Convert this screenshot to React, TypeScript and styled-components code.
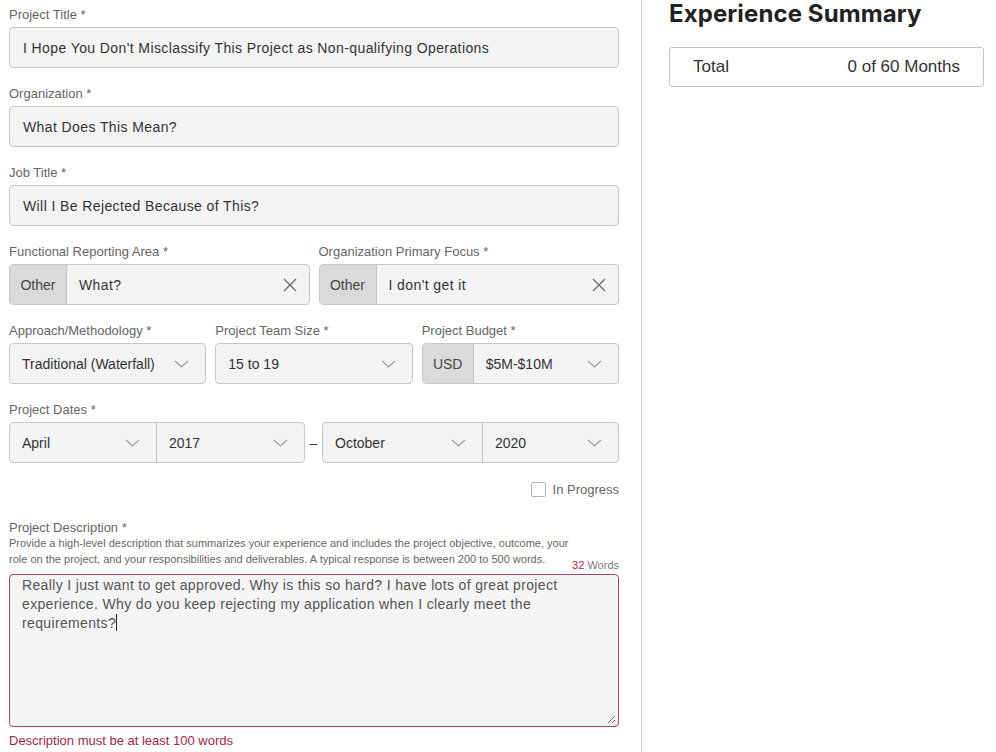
import styled, { createGlobalStyle } from "styled-components";

const GlobalStyle = createGlobalStyle`
  html, body {
    margin: 0;
    padding: 0;
    background: #ffffff;
  }
  body {
    font-family: "Liberation Sans", Arial, sans-serif;
    color: #333333;
  }
`;

const Page = styled.div`
  display: flex;
  min-height: 100vh;
  overflow: hidden;
`;

const FormColumn = styled.div`
  width: 610px;
  padding: 7px 0 0 9px;
  flex-shrink: 0;
`;

const Aside = styled.div`
  margin-left: 22px;
  border-left: 1px solid #cfcfcf;
  padding: 1px 0 0 27px;
  width: 315px;
`;

const SummaryTitle = styled.h2`
  margin: 0;
  font-family: Inter, "Liberation Sans", sans-serif;
  font-weight: 700;
  font-size: 24px;
  line-height: 26px;
  letter-spacing: 0.1px;
  color: #222222;
`;

const SummaryBox = styled.div`
  margin-top: 20px;
  height: 38px;
  border: 1px solid #c4c4c4;
  border-radius: 3px;
  display: flex;
  align-items: center;
  justify-content: space-between;
  padding: 0 23px;
  font-size: 17px;
  color: #333333;
`;

const Field = styled.div`
  margin-bottom: 18px;
  min-width: 0;
`;

const Label = styled.div`
  font-size: 13px;
  line-height: 16px;
  color: #666666;
  margin-bottom: 4px;
  white-space: nowrap;
`;

const Row = styled.div<{ $cols: number }>`
  display: grid;
  grid-template-columns: repeat(${(p) => p.$cols}, 1fr);
  column-gap: 9px;
`;

const Box = styled.div`
  height: 41px;
  box-sizing: border-box;
  border: 1px solid #c8c8c8;
  border-radius: 4px;
  background: #f3f3f3;
  display: flex;
  align-items: stretch;
  overflow: hidden;
`;

const Value = styled.div`
  flex: 1;
  display: flex;
  align-items: center;
  padding: 0 13px;
  font-size: 14px;
  letter-spacing: 0.4px;
  color: #333333;
  white-space: nowrap;
  overflow: hidden;
`;

const Addon = styled.div<{ $w: number }>`
  width: ${(p) => p.$w}px;
  box-sizing: border-box;
  flex-shrink: 0;
  background: #dadada;
  border-right: 1px solid #c4c4c4;
  display: flex;
  align-items: center;
  justify-content: center;
  font-size: 14px;
  color: #444444;
`;

const Segment = styled.div<{ $w?: number }>`
  box-sizing: border-box;
  display: flex;
  align-items: center;
  ${(p) => (p.$w ? `width: ${p.$w}px; flex-shrink: 0;` : "flex: 1;")}
  padding: 0 14px 0 12px;
  font-size: 14px;
  color: #333333;
  & + & {
    border-left: 1px solid #c4c4c4;
  }
`;

const SegText = styled.span<{ $loose?: boolean }>`
  flex: 1;
  white-space: nowrap;
  letter-spacing: ${(p) => (p.$loose ? "0.4px" : "0")};
`;

const IconWrap = styled.span<{ $shift: number }>`
  display: flex;
  align-items: center;
  margin-right: ${(p) => p.$shift}px;
`;

const DateRow = styled.div`
  display: flex;
  align-items: center;
`;

const DateGroup = styled(Box)<{ $w: number }>`
  width: ${(p) => p.$w}px;
`;

const Dash = styled.div`
  width: 17px;
  text-align: center;
  font-size: 14px;
  color: #444444;
`;

const CheckRow = styled.label`
  display: flex;
  justify-content: flex-end;
  align-items: center;
  gap: 7px;
  height: 16px;
  font-size: 13px;
  color: #666666;
`;

const CheckBox = styled.span`
  width: 13px;
  height: 13px;
  border: 1px solid #b4b4b4;
  border-radius: 2px;
  background: #ffffff;
`;

const DescLabel = styled(Label)`
  margin: 23px 0 0;
`;

const HelpRow = styled.div`
  display: flex;
  align-items: flex-end;
  justify-content: space-between;
  margin-top: -1px;
`;

const Help = styled.div`
  width: 565px;
  font-size: 11px;
  line-height: 16px;
  color: #666666;
`;

const WordCount = styled.div`
  font-size: 11px;
  color: #777777;
  margin-bottom: -4px;
  white-space: nowrap;
  & b {
    font-weight: 400;
    color: #b0244f;
  }
`;

const TextArea = styled.div`
  position: relative;
  margin-top: 7px;
  height: 153px;
  box-sizing: border-box;
  border: 1px solid #a8456f;
  border-radius: 4px;
  background: #f4f4f4;
  padding: 1px 40px 0 12px;
  font-size: 14px;
  line-height: 19px;
  letter-spacing: 0.35px;
  color: #555555;
`;

const Caret = styled.span`
  display: inline-block;
  width: 1px;
  height: 17px;
  background: #222222;
  vertical-align: -3px;
`;

const Grip = styled.svg`
  position: absolute;
  right: 2px;
  bottom: 2px;
`;

const ErrorText = styled.div`
  margin-top: 6px;
  font-size: 13px;
  color: #a0264f;
`;

function Chevron() {
  return (
    <IconWrap $shift={2}>
      <svg width="15" height="8" viewBox="0 0 15 8">
        <path d="M1 1l6.5 6 6.5-6" fill="none" stroke="#a0a0a0" strokeWidth="1.2" />
      </svg>
    </IconWrap>
  );
}

function Clear() {
  return (
    <IconWrap $shift={-2}>
      <svg width="14" height="14" viewBox="0 0 14 14">
        <path d="M1 1l12 12M13 1L1 13" fill="none" stroke="#6f6f6f" strokeWidth="1.4" />
      </svg>
    </IconWrap>
  );
}

function Select({ value, w }: { value: string; w?: number }) {
  return (
    <Segment $w={w}>
      <SegText>{value}</SegText>
      <Chevron />
    </Segment>
  );
}

function TextField({ label, value }: { label: string; value: string }) {
  return (
    <Field>
      <Label>{label}</Label>
      <Box>
        <Value>{value}</Value>
      </Box>
    </Field>
  );
}

function OtherField({ label, value }: { label: string; value: string }) {
  return (
    <Field>
      <Label>{label}</Label>
      <Box>
        <Addon $w={57}>Other</Addon>
        <Segment>
          <SegText $loose>{value}</SegText>
          <Clear />
        </Segment>
      </Box>
    </Field>
  );
}

export default function App() {
  return (
    <Page>
      <GlobalStyle />
      <FormColumn>
        <TextField
          label="Project Title *"
          value="I Hope You Don't Misclassify This Project as Non-qualifying Operations"
        />
        <TextField label="Organization *" value="What Does This Mean?" />
        <TextField label="Job Title *" value="Will I Be Rejected Because of This?" />

        <Row $cols={2}>
          <OtherField label="Functional Reporting Area *" value="What?" />
          <OtherField label="Organization Primary Focus *" value="I don't get it" />
        </Row>

        <Row $cols={3}>
          <Field>
            <Label>Approach/Methodology *</Label>
            <Box>
              <Select value="Traditional (Waterfall)" />
            </Box>
          </Field>
          <Field>
            <Label>Project Team Size *</Label>
            <Box>
              <Select value="15 to 19" />
            </Box>
          </Field>
          <Field>
            <Label>Project Budget *</Label>
            <Box>
              <Addon $w={51}>USD</Addon>
              <Select value="$5M-$10M" />
            </Box>
          </Field>
        </Row>

        <Field>
          <Label>Project Dates *</Label>
          <DateRow>
            <DateGroup $w={296}>
              <Select value="April" w={146} />
              <Select value="2017" />
            </DateGroup>
            <Dash>–</Dash>
            <DateGroup $w={297}>
              <Select value="October" w={159} />
              <Select value="2020" />
            </DateGroup>
          </DateRow>
        </Field>

        <CheckRow>
          <CheckBox />
          In Progress
        </CheckRow>

        <DescLabel>Project Description *</DescLabel>
        <HelpRow>
          <Help>
            Provide a high-level description that summarizes your experience and includes the
            project objective, outcome, your role on the project, and your responsibilities and
            deliverables. A typical response is between 200 to 500 words.
          </Help>
          <WordCount>
            <b>32</b> Words
          </WordCount>
        </HelpRow>
        <TextArea>
          Really I just want to get approved. Why is this so hard? I have lots of great project
          experience. Why do you keep rejecting my application when I clearly meet the
          requirements?
          <Caret />
          <Grip width="9" height="9" viewBox="0 0 9 9">
            <path d="M8 1L1 8M8 5L5 8" stroke="#777777" strokeWidth="1" />
          </Grip>
        </TextArea>
        <ErrorText>Description must be at least 100 words</ErrorText>
      </FormColumn>

      <Aside>
        <SummaryTitle>Experience Summary</SummaryTitle>
        <SummaryBox>
          <span>Total</span>
          <span>0 of 60 Months</span>
        </SummaryBox>
      </Aside>
    </Page>
  );
}
